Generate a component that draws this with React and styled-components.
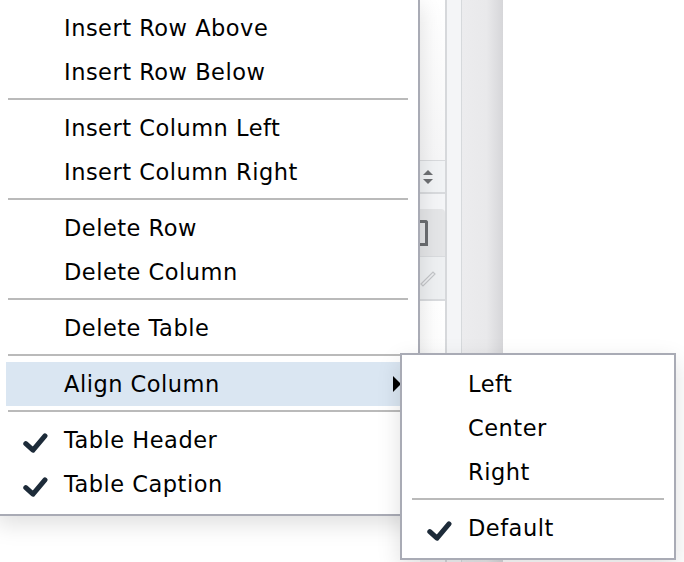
import React from "react";
import styled, { createGlobalStyle } from "styled-components";

const GlobalStyle = createGlobalStyle`
  html, body { margin: 0; padding: 0; background: #fff; }
  body { font-family: "DejaVu Sans", "Noto Sans", sans-serif; }
`;

const Page = styled.div`
  position: relative;
  width: 684px;
  height: 562px;
  overflow: hidden;
  display: flex;
  background: #fff;
`;

const Spacer = styled.div`
  width: 420px;
  flex: none;
`;

const FieldColumn = styled.div`
  width: 25px;
  flex: none;
  border-right: 2px solid #d6d8db;
  display: flex;
  flex-direction: column;
  background: #f4f5f7;
`;

const TextArea = styled.div`
  height: 160px;
  background: linear-gradient(#ffffff, #f6f6f7);
  border-bottom: 1px solid #d8dadd;
`;

const Spinner = styled.div`
  height: 31px;
  background: #f1f3f5;
  border-bottom: 2px solid #d8dadd;
  display: flex;
  flex-direction: column;
  justify-content: center;
  gap: 4px;
  padding-left: 3px;
`;

const Arrow = styled.div`
  width: 0;
  height: 0;
  border-left: 5px solid transparent;
  border-right: 5px solid transparent;
  ${(p) =>
    p.$up
      ? "border-bottom: 5px solid #6e7073;"
      : "border-top: 5px solid #6e7073;"}
`;

const Tab = styled.div`
  margin-top: 15px;
  height: 47px;
  background: #e4e5e7;
  border-top-right-radius: 4px;
  display: flex;
  align-items: center;
`;

const DocIcon = styled.div`
  width: 7px;
  height: 20px;
  margin-left: -2px;
  border: 3px solid #6b6d70;
  border-left: none;
  border-top-right-radius: 3px;
`;

const PencilRow = styled.div`
  height: 42px;
  background: #eef0f2;
  border-top: 1px solid #d9dbde;
  border-bottom: 2px solid #d9dbde;
  display: flex;
  align-items: center;
`;

const FieldRest = styled.div`
  flex: 1;
  background: linear-gradient(#ffffff, #f5f6f7);
`;

const Gutter = styled.div`
  width: 14px;
  flex: none;
  background: #f4f5f7;
  border-right: 1px solid #d6d9dc;
`;

const ScrollStrip = styled.div`
  width: 41px;
  flex: none;
  background: linear-gradient(to right, #ececee 0%, #e9e9eb 60%, #d6d6d9 100%);
`;

const Menu = styled.div`
  position: absolute;
  left: ${(p) => p.$left}px;
  top: ${(p) => p.$top}px;
  width: ${(p) => p.$width}px;
  box-sizing: border-box;
  background: #fff;
  border: 2px solid #a9abb5;
  padding: 7px 0 8px;
  box-shadow: 0 8px 22px rgba(0, 0, 0, 0.13);
`;

const Item = styled.div`
  position: relative;
  height: 44px;
  margin: 0 8px;
  padding-left: 58px;
  display: flex;
  align-items: center;
  font-size: 22.5px;
  letter-spacing: 0.5px;
  color: #000;
  background: ${(p) => (p.$active ? "#dae6f2" : "transparent")};
  white-space: nowrap;
`;

const Separator = styled.div`
  height: 2px;
  margin: 4px 10px 6px;
  background: #bababa;
`;

const CheckBox = styled.svg`
  position: absolute;
  left: 16px;
  top: 12px;
`;

const SubArrow = styled.div`
  position: absolute;
  right: 9px;
  top: 14px;
  width: 0;
  height: 0;
  border-top: 8px solid transparent;
  border-bottom: 8px solid transparent;
  border-left: 8px solid #000;
`;

const Check = () => (
  <CheckBox width="26" height="26" viewBox="0 0 26 26">
    <path
      d="M3.8 13.6 L11 20.2 L23 5.8"
      fill="none"
      stroke="#1d2b39"
      strokeWidth="5"
      strokeLinecap="round"
      strokeLinejoin="round"
    />
  </CheckBox>
);

const MenuItem = ({ label, checked, active, submenu }) => (
  <Item $active={active}>
    {checked && <Check />}
    {label}
    {submenu && <SubArrow />}
  </Item>
);

export default function App() {
  return (
    <>
      <GlobalStyle />
      <Page>
        <Spacer />
        <FieldColumn>
          <TextArea />
          <Spinner>
            <Arrow $up />
            <Arrow />
          </Spinner>
          <Tab>
            <DocIcon />
          </Tab>
          <PencilRow>
            <svg width="18" height="18" viewBox="0 0 18 18">
              <path
                d="M1 15 L13 3 L15 5 L3 17 Z"
                fill="none"
                stroke="#c4c6c9"
                strokeWidth="1.2"
              />
            </svg>
          </PencilRow>
          <FieldRest />
        </FieldColumn>
        <Gutter />
        <ScrollStrip />

        <Menu $left={-4} $top={-3} $width={424}>
          <MenuItem label="Insert Row Above" />
          <MenuItem label="Insert Row Below" />
          <Separator />
          <MenuItem label="Insert Column Left" />
          <MenuItem label="Insert Column Right" />
          <Separator />
          <MenuItem label="Delete Row" />
          <MenuItem label="Delete Column" />
          <Separator />
          <MenuItem label="Delete Table" />
          <Separator />
          <MenuItem label="Align Column" active submenu />
          <Separator />
          <MenuItem label="Table Header" checked />
          <MenuItem label="Table Caption" checked />
        </Menu>

        <Menu $left={400} $top={353} $width={276}>
          <MenuItem label="Left" />
          <MenuItem label="Center" />
          <MenuItem label="Right" />
          <Separator />
          <MenuItem label="Default" checked />
        </Menu>
      </Page>
    </>
  );
}
